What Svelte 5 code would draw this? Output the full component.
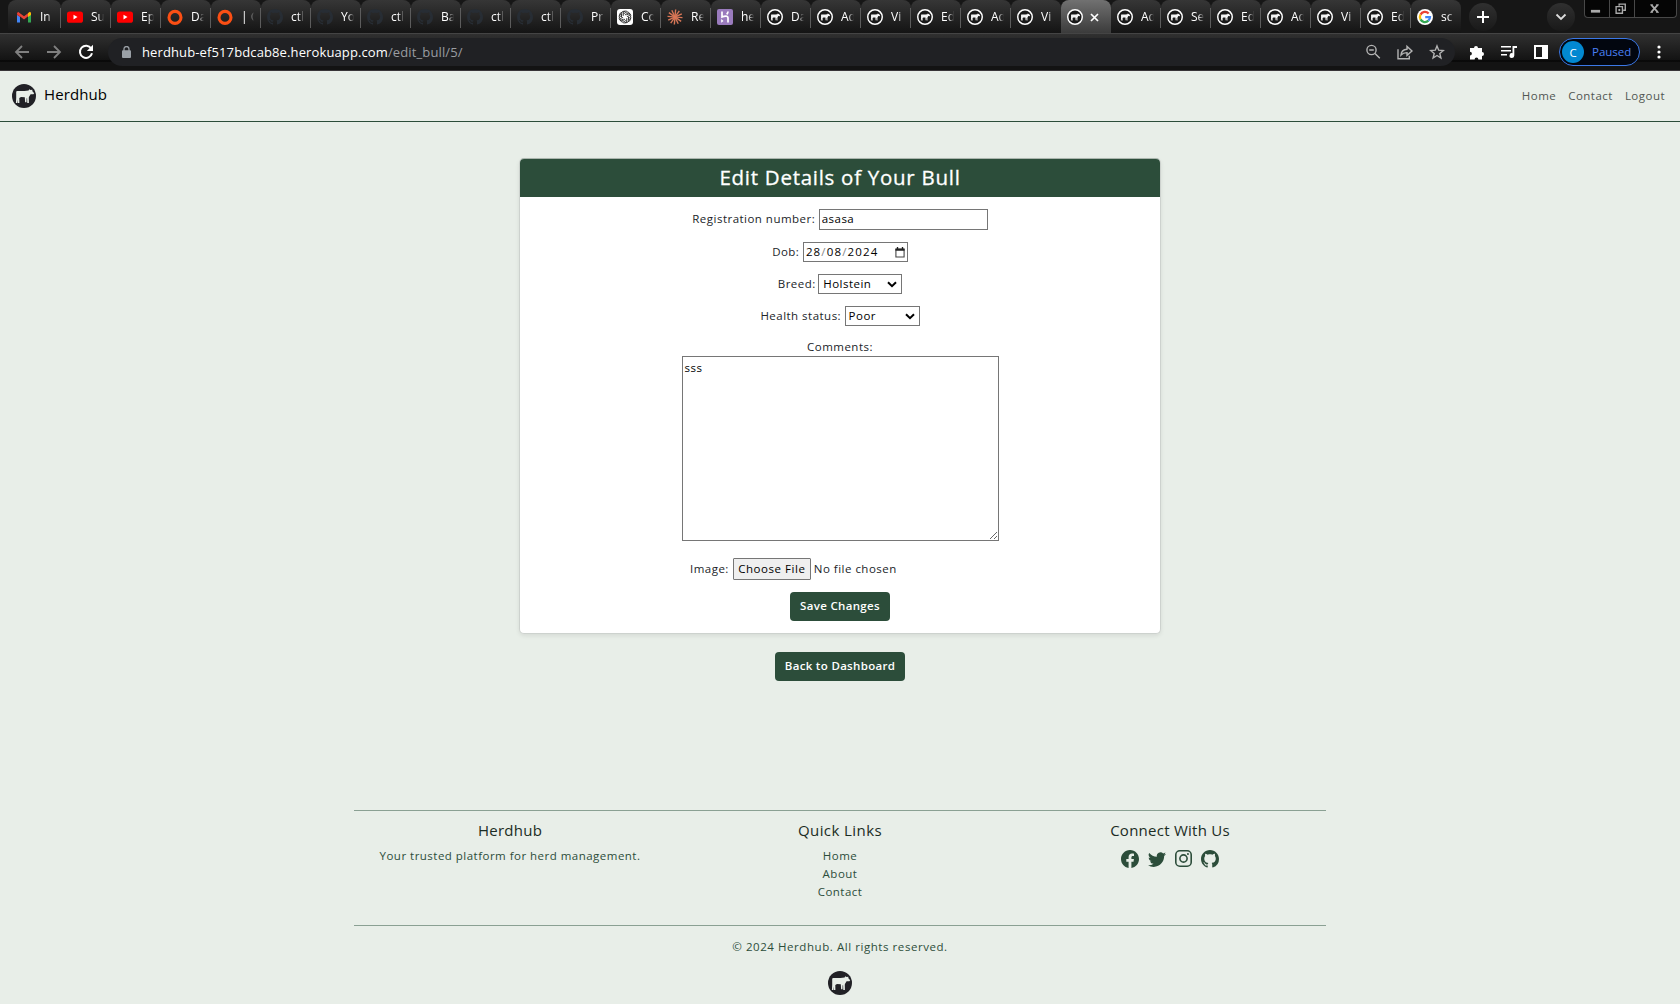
<script>
  const names = ['In|gmail', 'Su|youtube', 'Ep|youtube', 'Da|ring', '| C|ring', 'ctl|github', 'Yo|github', 'ctl|github', 'Ba|github', 'ctl|github', 'ctl|github', 'Pr|github', 'Co|gpt', 'Re|burst', 'he|heroku', 'Da|cow', 'Ad|cow', 'Vi|cow', 'Ed|cow', 'Ad|cow', 'Vi|cow', '|active', 'Ad|cow', 'Se|cow', 'Ed|cow', 'Ad|cow', 'Vi|cow', 'Ed|cow', 'sc|google'];
  const tabs = names.map((n) => {
    const cut = n.lastIndexOf('|');
    return { title: n.slice(0, cut), icon: n.slice(cut + 1) };
  });
  const octo = 'M8 0C3.58 0 0 3.58 0 8c0 3.54 2.29 6.53 5.47 7.59.4.07.55-.17.55-.38 0-.19-.01-.82-.01-1.49-2.01.37-2.53-.49-2.69-.94-.09-.23-.48-.94-.82-1.13-.28-.15-.68-.52-.01-.53.63-.01 1.08.58 1.23.82.72 1.21 1.87.87 2.33.66.07-.52.28-.87.51-1.07-1.78-.2-3.64-.89-3.64-3.95 0-.87.31-1.59.82-2.15-.08-.2-.36-1.02.08-2.12 0 0 .67-.21 2.2.82.64-.18 1.32-.27 2-.27s1.36.09 2 .27c1.53-1.04 2.2-.82 2.2-.82.44 1.1.16 1.92.08 2.12.51.56.82 1.27.82 2.15 0 3.07-1.87 3.75-3.65 3.95.29.25.54.73.54 1.48 0 1.07-.01 1.93-.01 2.2 0 .21.15.46.55.38A8.01 8.01 0 0 0 16 8c0-4.42-3.58-8-8-8z';
  const cow = 'M4.2 7.6 5.3 6.9 12.5 7 16.6 6.6 17.3 5.3 18.6 6 20.3 5.8 20.4 7.2 22.2 9.2 21.4 10.3 18.6 10.2 17.2 12.4 16.8 13.4 16.9 18.9 15.3 18.9 15.1 14.2 14.6 14.2 14.5 18.3 13.1 18.3 12.8 13.2 9 12.9 7.3 13.9 7.4 18.9 5.8 18.9 5.6 15.6 5.2 18.9 3.9 18.9 4.2 14 4.2 10Z';
</script>

{#snippet cowBadge(cls)}
  <svg class={cls} viewBox="0 0 24 24"><circle class="rim" cx="12" cy="12" r="12" /><path class="body" d={cow} /></svg>
{/snippet}

<div class="browser">
  <div class="strip">
    <div class="tabs">
      {#each tabs as t}
        <div class="tab {t.icon}">
          {#if t.icon === 'gmail'}
            <svg class="ico" viewBox="0 0 16 16"><path fill="#4285f4" d="M1 4v9.5h3V7z" /><path fill="#34a853" d="M12 7v6.5h3V4z" /><path fill="#c5221f" d="M1 3.5 4 5v3L1 6z" /><path fill="#ea4335" d="M2 2.8 8 7.3l6-4.5 1 2.2-7 5.6L1 5z" /><path fill="#fbbc04" d="M12 4.3 14 2.8 15 4v2l-3 2z" /></svg>
          {:else if t.icon === 'youtube'}
            <svg class="ico" viewBox="0 0 16 16"><rect y="2.5" width="16" height="11.3" rx="2.6" fill="#f00" /><path fill="#fff" d="m6.5 5.8 4 2.3-4 2.3z" /></svg>
          {:else if t.icon === 'ring'}
            <svg class="ico" viewBox="0 0 16 16"><circle cx="8" cy="8.4" r="6" fill="none" stroke="#fb4f14" stroke-width="3.1" /></svg>
          {:else if t.icon === 'github'}
            <svg class="ico" viewBox="0 0 16 16"><path fill="#272d34" d={octo} /></svg>
          {:else if t.icon === 'gpt'}
            <svg class="ico" viewBox="0 0 16 16"><rect width="16" height="16" rx="3" fill="#fff" /><g fill="none" stroke="#222" stroke-width=".8">{#each [0, 60, 120, 180, 240, 300] as a}<path transform="rotate({a} 8 8)" d="M6.2 5.2V4.1A2.3 2.3 0 0 1 10.4 3M6.2 7V5L9.3 3.2a2.3 2.3 0 0 1 3.3 2.6" />{/each}</g></svg>
          {:else if t.icon === 'burst'}
            <svg class="ico" viewBox="0 0 16 16"><g stroke="#d97757" stroke-width="1.4">{#each [0, 30, 60, 90, 120, 150] as a}<path transform="rotate({a + 5} 8 8)" d="M8 .5v15" />{/each}</g></svg>
          {:else if t.icon === 'heroku'}
            <svg class="ico" viewBox="0 0 16 16"><rect width="16" height="16" rx="2" fill="#9a7bbd" /><path fill="none" stroke="#fff" stroke-width="1.7" d="M5 2.5V8c3-1.2 6-1.3 6 .8v4.7M11 2.5c0 1.2-.5 2-1.3 2.8" /><path fill="#fff" d="m4.2 10 2.3 1.9-2.3 1.9z" /></svg>
          {:else if t.icon === 'google'}
            <svg class="ico" viewBox="0 0 16 16"><circle cx="8" cy="8" r="8" fill="#fff" /><g fill="none" stroke-width="2.3"><path stroke="#ea4335" d="M3.5 5.6A5 5 0 0 1 11.6 4.5" /><path stroke="#fbbc04" d="M3.5 5.6a5 5 0 0 0 0 4.8" /><path stroke="#34a853" d="M3.5 10.4a5 5 0 0 0 7.9 1.3" /><path stroke="#4285f4" d="M11.4 11.7A5 5 0 0 0 13 8.1H8.2" /></g></svg>
          {:else}
            {@render cowBadge('ico fav')}
          {/if}
          {#if t.icon === 'active'}
            <svg class="close" viewBox="0 0 9 9"><path d="m1 1 7 7m0-7L1 8" /></svg>
          {:else}
            <span class="title">{t.title}</span>
          {/if}
        </div>
      {/each}
    </div>
    <div class="round plus"><svg viewBox="0 0 14 14"><path d="M7 1v12M1 7h12" /></svg></div>
    <div class="round down"><svg viewBox="0 0 14 14"><path d="m2.5 4.5 4.5 4.5 4.5-4.5" /></svg></div>
    <div class="win">
      <span><svg viewBox="0 0 12 12"><path fill="#aaa" d="M1 7.5h10v3H1z" /></svg></span>
      <span><svg viewBox="0 0 12 12"><path fill="none" stroke="#aaa" stroke-width="1.5" d="M4.5 3V1.2h6.7v6.7H9M1.2 4h6.9v7.2H1.2z" /><path fill="#aaa" d="M3.7 6.5h2v2.3h-2z" /></svg></span>
      <span class="wide"><svg viewBox="0 0 12 12"><path stroke="#aaa" stroke-width="2" d="m2.5 2 7 8m0-8-7 8" /><path stroke="#aaa" d="M1.3 2h3M7.8 2h3M1.3 10.2h3M7.8 10.2h3" /></svg></span>
    </div>
  </div>

  <div class="toolbar">
    <svg class="nav dim" viewBox="0 0 16 16"><path d="M15 8H2m6-6L2 8l6 6" /></svg>
    <svg class="nav dim" viewBox="0 0 16 16"><path d="M1 8h13M8 2l6 6-6 6" /></svg>
    <svg class="nav" viewBox="0 0 16 16"><path d="M13.2 4.5A6.1 6.1 0 1 0 14 9.3" /><path class="solid" d="M15 .8v6.2H8.8z" /></svg>
    <div class="omni">
      <svg class="lock" viewBox="0 0 9 12"><rect y="4.2" width="9" height="7.8" rx="1" /><path d="M2 5V3a2.5 2.5 0 0 1 5 0v2" /></svg>
      <span class="url">herdhub-ef517bdcab8e.herokuapp.com<i>/edit_bull/5/</i></span>
      <svg class="oi" viewBox="0 0 16 16"><circle cx="6.5" cy="6" r="4.6" /><path d="m10 9.5 4.8 4.8M4.2 6h4.6" /></svg>
      <svg class="oi" viewBox="0 0 16 16"><path d="M1 5.2v9.5h11.3v-3M4 11c.3-3.8 2.5-5.6 6-5.8V2.4L15 7l-5 4.4V8.6C7.3 8.6 5.5 9.3 4 11z" /></svg>
      <svg class="oi" viewBox="0 0 16 16"><path d="m8 1.9 1.7 4.3 4.7.3-3.6 3 1.1 4.5L8 11.5 4.1 14l1.1-4.5-3.6-3 4.7-.3z" /></svg>
    </div>
    <svg class="ti ext" viewBox="0 0 16 16"><path d="M1 4h4a2 2 0 1 1 4 0h4v4a2 2 0 1 1 0 4v3.5H9.4a1.9 1.9 0 0 0-3.8 0H1v-4a1.9 1.9 0 0 0 0-3.8z" /></svg>
    <svg class="ti media" viewBox="0 0 16 16"><path d="M0 2h10v1.6H0zM0 6h10v1.6H0zM0 10h6v1.6H0zM11.5 2H16v2h-2.7v7.5a2.4 2.4 0 1 1-1.8-2.3z" /></svg>
    <svg class="ti side" viewBox="0 0 16 16"><path fill-rule="evenodd" d="M1 1h14v14H1zm2 2v10h6V3z" /></svg>
    <div class="profile"><b>C</b><span>Paused</span></div>
    <svg class="ti more" viewBox="0 0 16 16"><circle cx="8" cy="3" r="1.6" /><circle cx="8" cy="8" r="1.6" /><circle cx="8" cy="13" r="1.6" /></svg>
  </div>
</div>

<header>
  {@render cowBadge('logo')}
  <span class="brand">Herdhub</span>
  <nav><span>Home</span><span>Contact</span><span>Logout</span></nav>
</header>

<main>
  <section class="card">
    <h1>Edit Details of Your Bull</h1>
    <form>
      <div class="row"><label for="reg">Registration number:</label><input id="reg" value="asasa" /></div>
      <div class="row"><span>Dob:</span><div class="box date"><span>28<i>/</i>08<i>/</i>2024</span><svg viewBox="0 0 11 12"><path d="M1 2.5h9V11H1z" /><path class="top" d="M.5 1.5h10V4H.5zM2 0h1.5v2H2zM7.5 0H9v2H7.5z" /></svg></div></div>
      <div class="row r3"><span>Breed:</span><div class="box breed"><span>Holstein</span><svg viewBox="0 0 10 7"><path d="m1 1.2 4 4 4-4" /></svg></div></div>
      <div class="row"><span>Health status:</span><div class="box health"><span>Poor</span><svg viewBox="0 0 10 7"><path d="m1 1.2 4 4 4-4" /></svg></div></div>
      <label class="cl" for="com">Comments:</label>
      <textarea id="com">sss</textarea>
      <div class="file"><span class="il">Image:</span><button type="button" class="choose">Choose File</button><span class="none">No file chosen</span></div>
      <button type="button" class="btn save">Save Changes</button>
    </form>
  </section>
  <button class="btn back">Back to Dashboard</button>
</main>

<footer>
  <div class="cols">
    <div><h2>Herdhub</h2><p>Your trusted platform for herd management.</p></div>
    <div><h2 class="links">Quick Links</h2><p>Home</p><p>About</p><p>Contact</p></div>
    <div>
      <h2>Connect With Us</h2>
      <div class="social">
        <svg viewBox="0 0 16 16"><path d="M16 8.049c0-4.446-3.582-8.05-8-8.05C3.58 0-.002 3.603-.002 8.05c0 4.017 2.926 7.347 6.75 7.951v-5.625h-2.03V8.05H6.75V6.275c0-2.017 1.195-3.131 3.022-3.131.876 0 1.791.157 1.791.157v1.98h-1.009c-.993 0-1.303.621-1.303 1.258v1.51h2.218l-.354 2.326H9.25V16c3.824-.604 6.75-3.934 6.75-7.951z" /></svg>
        <svg viewBox="0 0 16 16"><path d="M5.026 15c6.038 0 9.341-5.003 9.341-9.334 0-.14 0-.282-.006-.422A6.685 6.685 0 0 0 16 3.542a6.658 6.658 0 0 1-1.889.518 3.301 3.301 0 0 0 1.447-1.817 6.533 6.533 0 0 1-2.087.793A3.286 3.286 0 0 0 7.875 6.03a9.325 9.325 0 0 1-6.767-3.429 3.289 3.289 0 0 0 1.018 4.382A3.323 3.323 0 0 1 .64 6.575v.045a3.288 3.288 0 0 0 2.632 3.218 3.203 3.203 0 0 1-.865.115 3.23 3.23 0 0 1-.614-.057 3.283 3.283 0 0 0 3.067 2.277A6.588 6.588 0 0 1 .78 13.58a6.32 6.32 0 0 1-.78-.045A9.344 9.344 0 0 0 5.026 15z" /></svg>
        <svg class="insta" viewBox="0 0 16 16"><rect x=".75" y=".75" width="14.5" height="14.5" rx="3.8" /><circle cx="8" cy="8" r="3.4" /><circle class="dot" cx="12.2" cy="3.8" r=".95" /></svg>
        <svg viewBox="0 0 16 16"><path d={octo} /></svg>
      </div>
    </div>
  </div>
  <p class="copy">© 2024 Herdhub. All rights reserved.</p>
  {@render cowBadge('logo')}
</footer>

<style>
  :global(body) { background: #e8eee8; font-family: 'Open Sans', sans-serif; font-size: 11.5px; color: #212529; overflow: hidden; }
  :global(#app) { height: 1004px; display: flex; flex-direction: column; overflow: hidden; }
  svg { display: block; flex: none; }
  i { font-style: normal; }
  h1, h2, p { margin: 0; font-weight: 400; }

  .browser { height: 71px; flex: none; background: #141414; }
  .strip { height: 33px; display: flex; box-sizing: border-box; padding-left: 8px; background: #161616; }
  .tabs { display: flex; }
  .tab { width: 50px; height: 33px; box-sizing: border-box; display: flex; align-items: center; gap: 8px; padding: 1px 0 0 6px; border-radius: 8px 8px 0 0; background: linear-gradient(#363636, #141414); overflow: hidden; position: relative; }
  .tab:first-child { width: 53px; padding-left: 8px; }
  .tab::after { content: ''; position: absolute; right: 0; top: 8px; width: 1px; height: 20px; background: #5c5c5c; }
  .tab:has(+ .active)::after, .tab:last-child::after, .tab.active::after { display: none; }
  .tab.active { background: linear-gradient(#717171, #3b3b3b); }
  .ico { width: 16px; height: 16px; }
  .tab .title { width: 18px; margin-top: -1px; white-space: nowrap; color: #fff; font-size: 12px; line-height: 20px; mask-image: linear-gradient(90deg, #000 7px, transparent 13px); }
  .close { width: 9px; height: 9px; stroke: #fff; stroke-width: 1.7; margin-left: -1px; }
  .rim { fill: #212126; }
  .body { fill: #e8eee8; }
  .fav .rim { fill: #191919; stroke: #fff; stroke-width: 2.2; r: 10.9px; }
  .fav .body { fill: #f4f4f4; transform: scale(.76); transform-origin: 12px 12px; }
  .round { width: 28px; height: 28px; border-radius: 50%; background: linear-gradient(#303030, #191919); display: grid; place-items: center; margin-top: 3px; flex: none; }
  .round svg { width: 14px; height: 14px; fill: none; stroke: #fff; stroke-width: 2; }
  .plus { margin-left: 8px; }
  .down { margin-left: 50px; }
  .down svg { stroke-width: 1.8; stroke: #ddd; }
  .win { margin-left: 9px; width: 91px; height: 17px; border: 1px solid #484848; border-top: 0; border-radius: 0 0 4px 4px; background: #050505; display: flex; }
  .win span { width: 25px; display: grid; place-items: center; border-right: 1px solid #484848; box-sizing: border-box; padding: 0 3px 1px 0; }
  .win .wide { flex: 1; border: 0; }
  .win svg { width: 11px; height: 11px; }

  .toolbar { height: 38px; box-sizing: border-box; display: flex; align-items: center; border-top: 1px solid #444; border-bottom: 1px solid #383538; background: linear-gradient(#303030, #131313 26px, #000 27px, #131313 28px); padding: 0 0 0 14px; }
  .nav { width: 16px; height: 16px; margin-right: 16px; fill: none; stroke: #fff; stroke-width: 2; }
  .nav.dim { stroke: #808080; stroke-width: 1.8; }
  .nav .solid { fill: #fff; stroke: none; }
  .omni { width: 1347px; height: 28px; box-sizing: border-box; border-radius: 14px; background: #202124; display: flex; align-items: center; padding: 0 10px 0 14px; margin-left: -2px; flex: none; }
  .lock { width: 9px; height: 12px; fill: #9aa0a6; }
  .lock path { fill: none; stroke: #9aa0a6; stroke-width: 1.3; }
  .url { color: #fff; font-size: 13px; letter-spacing: .12px; margin: 0 auto 0 11px; white-space: nowrap; }
  .url i { color: #9a9da1; }
  .oi { width: 16px; height: 16px; margin-left: 16px; fill: none; stroke: #b4b4b4; stroke-width: 1.4; }
  .ti { width: 16px; height: 16px; fill: #fff; }
  .ext { margin-left: 14px; }
  .media { margin-left: 16px; }
  .side { margin-left: 16px; }
  .profile { width: 81px; height: 28px; box-sizing: border-box; border: 1px solid #3b78e7; border-radius: 14px; background: #02060f; display: flex; align-items: center; padding-left: 2px; margin-left: 10px; flex: none; color: #4a80f5; font-size: 11.5px; }
  .profile b { width: 22px; height: 22px; border-radius: 50%; background: #0288d1; color: #fff; font-weight: 400; display: grid; place-items: center; margin-right: 8px; }
  .profile span { margin-top: -1px; }
  .more { margin-left: 11px; }

  header { height: 51px; flex: none; box-sizing: border-box; display: flex; align-items: center; border-bottom: 1px solid #2c4d3a; padding: 0 15px 0 12px; }
  .logo { width: 24px; height: 24px; }
  .brand { color: #000; font-size: 15px; margin: -4px 0 0 8px; letter-spacing: .1px; }
  nav { margin: -2px 0 0 auto; display: flex; gap: 12px; color: #515753; letter-spacing: .48px; }

  main { height: 688px; flex: none; display: flex; flex-direction: column; align-items: center; padding-top: 36px; box-sizing: border-box; }
  .card { width: 642px; height: 476px; box-sizing: border-box; border: 1px solid #cdd2ce; border-top-color: #aab5ad; border-radius: 5px; background: #fff; box-shadow: 0 2px 4px rgba(0, 0, 0, .08); overflow: hidden; }
  h1 { height: 38px; background: #2c4d3a; color: #fff; text-align: center; font-size: 20.5px; line-height: 36px; letter-spacing: .72px; -webkit-text-stroke: .3px #fff; }
  form { display: flex; flex-direction: column; align-items: center; padding-top: 12px; letter-spacing: .48px; }
  .row { display: flex; align-items: center; justify-content: center; gap: 3.5px; margin-bottom: 12px; }
  .r3 { gap: 2.5px; }
  .row > span, .row > label { margin-top: -2px; }
  input, .box, textarea { box-sizing: border-box; border: 1px solid #767676; background: #fff; color: #000; font: 11.5px 'Open Sans', sans-serif; letter-spacing: .48px; padding: 0 2px; border-radius: 0; }
  input { width: 169px; height: 21px; padding-bottom: 2px; }
  .box { height: 20px; display: flex; align-items: center; justify-content: space-between; }
  .box span { margin-top: -2px; }
  .box svg { width: 10px; height: 7px; fill: none; stroke: #000; stroke-width: 2; margin-right: 2px; }
  .date { width: 105px; letter-spacing: 1.15px; }
  .date i { color: #888; }
  .date svg { width: 10px; height: 11px; stroke-width: 1.2; margin-right: 0; stroke: #444; }
  .date .top { fill: #222; stroke: none; }
  .breed { width: 84px; padding-left: 4px; }
  .health { width: 75px; padding-left: 3px; }
  .cl { height: 18px; line-height: 17px; }
  textarea { width: 317px; height: 185px; padding: 3px 2px; resize: both; margin: 0; }
  .file { width: 300px; height: 22px; margin-top: 17px; display: flex; align-items: center; }
  .il, .none { margin-top: -1px; }
  .choose { width: 78px; height: 22px; padding: 0 0 1px; margin: 0 3px 0 4px; border: 1px solid #767676; border-radius: 1px; background: #efefef; color: #000; font: 11.5px 'Open Sans', sans-serif; letter-spacing: .55px; white-space: nowrap; }
  .btn { border: 0; padding: 0 0 2px; border-radius: 4px; background: #2c4d3a; color: #fff; height: 29px; font: 600 11.5px 'Open Sans', sans-serif; letter-spacing: .32px; }
  .save { width: 100px; margin-top: 12px; }
  .back { width: 130px; margin-top: 18px; }

  footer { width: 972px; margin: 0 auto; display: flex; flex-direction: column; align-items: center; border-top: 1px solid #8aa093; color: #2c4d3a; letter-spacing: .48px; }
  .cols { width: 100%; height: 115px; box-sizing: border-box; display: grid; grid-template-columns: 312px 348px 312px; text-align: center; border-bottom: 1px solid #8aa093; padding-top: 9px; }
  h2 { font-size: 15px; line-height: 20px; letter-spacing: .25px; color: #1b2c24; margin-bottom: 7px; }
  .links { letter-spacing: .42px; }
  p { line-height: 18px; }
  .social { display: flex; gap: 9px; justify-content: center; padding: 3px 1px 0 0; }
  .social svg { width: 18px; height: 18px; fill: #2c4d3a; }
  .social .insta { width: 17px; height: 17px; fill: none; stroke: #2c4d3a; stroke-width: 1.5; }
  .social .dot { fill: #2c4d3a; stroke: none; }
  .copy { margin: 12px 0 15px; letter-spacing: .56px; }
</style>
